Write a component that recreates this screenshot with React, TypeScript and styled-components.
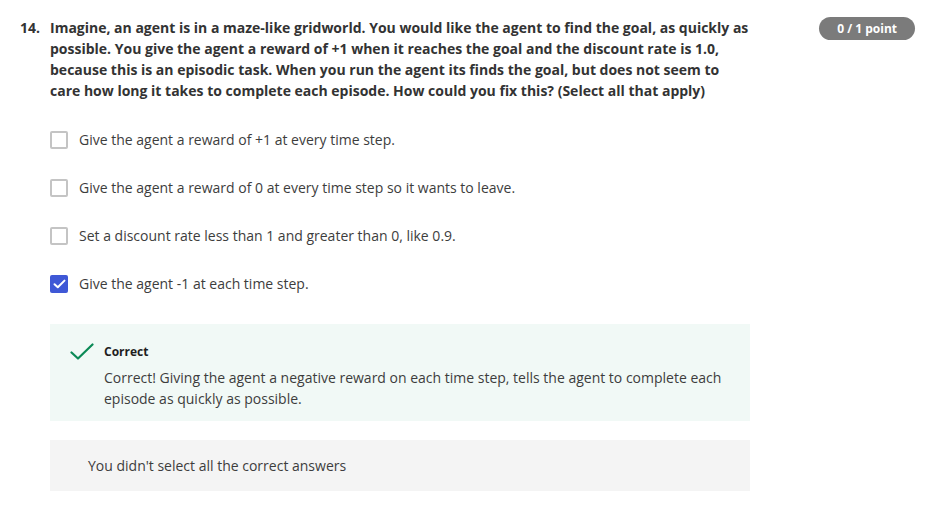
import React from "react";
import styled, { createGlobalStyle } from "styled-components";

const Global = createGlobalStyle`
  html, body { margin: 0; padding: 0; background: #ffffff; }
  body { font-family: "Open Sans", "Noto Sans", sans-serif; color: #333333; }
  * { box-sizing: border-box; }
`;

const Page = styled.div`
  padding: 17px 28px 20px 20px;
`;

const Header = styled.div`
  display: flex;
  align-items: flex-start;
`;

const Number = styled.div`
  width: 30px;
  flex: none;
  font-size: 14px;
  font-weight: 700;
  line-height: 21px;
  color: #333333;
`;

const Question = styled.div`
  width: 700px;
  flex: none;
  font-size: 14px;
  font-weight: 700;
  line-height: 21px;
  color: #333333;
`;

const Badge = styled.div`
  margin-left: auto;
  height: 23px;
  padding: 0 18px;
  border-radius: 12px;
  background: #7b7b7b;
  color: #ffffff;
  font-size: 12px;
  font-weight: 700;
  line-height: 23px;
  white-space: nowrap;
`;

const Body = styled.div`
  margin-left: 30px;
  width: 700px;
`;

const Options = styled.div`
  margin-top: 15px;
  display: flex;
  flex-direction: column;
`;

const OptionRow = styled.label`
  display: flex;
  align-items: center;
  gap: 11px;
  padding: 12px 0;
  line-height: 24px;
  font-size: 14px;
  color: #3d3d3d;
`;

const Box = styled.span<{ $checked?: boolean }>`
  width: 18px;
  height: 18px;
  flex: none;
  border-radius: 2px;
  border: ${(p) => (p.$checked ? "none" : "2px solid #c4c4c4")};
  background: ${(p) => (p.$checked ? "#3f58d6" : "#ffffff")};
  display: flex;
  align-items: center;
  justify-content: center;
`;

const Feedback = styled.div`
  margin-top: 16px;
  background: #f1f9f6;
  padding: 19px 28px 12px 20px;
  display: flex;
  gap: 10px;
`;

const FeedbackText = styled.div`
  display: flex;
  flex-direction: column;
`;

const FeedbackTitle = styled.div`
  font-size: 12px;
  font-weight: 700;
  line-height: 18px;
  color: #1f1f1f;
`;

const FeedbackBody = styled.div`
  margin-top: 6px;
  font-size: 14px;
  line-height: 21px;
  color: #3d3d3d;
`;

const Note = styled.div`
  margin-top: 19px;
  background: #f4f4f4;
  height: 51px;
  padding: 0 38px;
  display: flex;
  align-items: center;
  font-size: 14px;
  color: #3d3d3d;
`;

const options = [
  { text: "Give the agent a reward of +1 at every time step.", checked: false },
  { text: "Give the agent a reward of 0 at every time step so it wants to leave.", checked: false },
  { text: "Set a discount rate less than 1 and greater than 0, like 0.9.", checked: false },
  { text: "Give the agent -1 at each time step.", checked: true },
];

export default function App() {
  return (
    <>
      <Global />
      <Page>
        <Header>
          <Number>14.</Number>
          <Question>
            Imagine, an agent is in a maze-like gridworld. You would like the agent to find the goal, as quickly as
            possible. You give the agent a reward of +1 when it reaches the goal and the discount rate is 1.0,
            because this is an episodic task. When you run the agent its finds the goal, but does not seem to
            care how long it takes to complete each episode. How could you fix this? (Select all that apply)
          </Question>
          <Badge>0 / 1 point</Badge>
        </Header>
        <Body>
          <Options>
            {options.map((o) => (
              <OptionRow key={o.text}>
                <Box $checked={o.checked}>
                  {o.checked && (
                    <svg width="13" height="10" viewBox="0 0 13 10">
                      <path d="M1.5 5.2 L4.8 8.3 L11.5 1.6" fill="none" stroke="#fff" strokeWidth="2" strokeLinecap="round" strokeLinejoin="round" />
                    </svg>
                  )}
                </Box>
                {o.text}
              </OptionRow>
            ))}
          </Options>
          <Feedback>
            <svg width="24" height="18" viewBox="0 0 24 18" style={{ flex: "none" }}>
              <path d="M1.5 9.5 L8 15.5 L22.5 1.5" fill="none" stroke="#0b8a56" strokeWidth="2.2" strokeLinecap="round" strokeLinejoin="round" />
            </svg>
            <FeedbackText>
              <FeedbackTitle>Correct</FeedbackTitle>
              <FeedbackBody>
                Correct! Giving the agent a negative reward on each time step, tells the agent to complete each
                episode as quickly as possible.
              </FeedbackBody>
            </FeedbackText>
          </Feedback>
          <Note>You didn't select all the correct answers</Note>
        </Body>
      </Page>
    </>
  );
}
